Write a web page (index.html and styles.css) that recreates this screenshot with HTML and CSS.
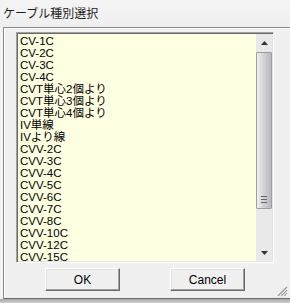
FILE: index.html
```html
<!DOCTYPE html>
<html>
<head>
<meta charset="utf-8">
<link rel="stylesheet" href="styles.css">
</head>
<body>
<div class="title">ケーブル種別選択</div>
<div class="dialog">
  <div class="listbox">
    <ul class="items">
      <li>CV-1C</li>
      <li>CV-2C</li>
      <li>CV-3C</li>
      <li>CV-4C</li>
      <li>CVT単心2個より</li>
      <li>CVT単心3個より</li>
      <li>CVT単心4個より</li>
      <li>IV単線</li>
      <li>IVより線</li>
      <li>CVV-2C</li>
      <li>CVV-3C</li>
      <li>CVV-4C</li>
      <li>CVV-5C</li>
      <li>CVV-6C</li>
      <li>CVV-7C</li>
      <li>CVV-8C</li>
      <li>CVV-10C</li>
      <li>CVV-12C</li>
      <li>CVV-15C</li>
    </ul>
    <div class="scrollbar">
      <div class="arrow up"><svg width="7" height="4" viewBox="0 0 7 4"><path d="M3.5 0 L7 4 L0 4 Z" fill="#333"/></svg></div>
      <div class="track">
        <div class="thumb">
          <svg class="grip" width="6" height="7" viewBox="0 0 6 7"><path d="M0 0.5H6M0 3.5H6M0 6.5H6" stroke="#666" stroke-width="1"/></svg>
        </div>
      </div>
      <div class="arrow down"><svg width="7" height="4" viewBox="0 0 7 4"><path d="M0 0 L7 0 L3.5 4 Z" fill="#333"/></svg></div>
    </div>
  </div>
  <div class="buttons">
    <button class="btn ok">OK</button>
    <button class="btn cancel">Cancel</button>
  </div>
  <svg class="resize-grip" width="12" height="12" viewBox="0 0 12 12">
    <path d="M11 2 L2 11 M11 5 L5 11 M11 8 L8 11" stroke="#9a9a9a" stroke-width="1.4"/>
    <path d="M12 3 L3 12 M12 6 L6 12 M12 9 L9 12" stroke="#fff" stroke-width="0.8"/>
  </svg>
</div>
<div class="bottom-band"></div>
</body>
</html>
```

FILE: styles.css
```css
html, body {
  margin: 0;
  padding: 0;
}
body {
  width: 290px;
  height: 303px;
  overflow: hidden;
  background: linear-gradient(to right, #f2f2f2 0%, #f7f7f7 40%, #ececec 60%, #e9eeee 85%, #eeeeee 100%);
  font-family: "Liberation Sans", "Noto Sans CJK JP", sans-serif;
}
.title {
  height: 27px;
  box-sizing: border-box;
  padding: 5px 0 0 3px;
  font-family: "Noto Sans CJK JP", sans-serif;
  font-size: 12px;
  line-height: 16px;
  color: #1e1e1e;
  background: linear-gradient(to bottom, #f4f4f4 0%, #efefef 100%);
}
.dialog {
  position: relative;
  margin-left: 3px;
  height: 272px;
  box-sizing: border-box;
  background: #f0f0f0;
  border-top: 1px solid #8c8c8c;
  border-left: 1px solid #8c8c8c;
  border-bottom: 1px solid #6a6a6a;
  box-shadow: inset 1px 1px 0 #ffffff;
  padding: 4px 0 0 12px;
}
.listbox {
  display: flex;
  width: 258px;
  height: 231px;
  box-sizing: border-box;
  border-top: 1px solid #a0a0a0;
  border-left: 1px solid #a0a0a0;
  border-right: 1px solid #ffffff;
  border-bottom: 1px solid #ffffff;
  box-shadow: inset 1px 1px 0 #696969, inset -1px -1px 0 #e3e3e3;
  background: #ffffe1;
  padding: 2px 1px 1px 2px;
}
.items {
  list-style: none;
  margin: 0;
  padding: 0 0 0 1px;
  flex: 1;
  overflow: hidden;
  font-size: 11.5px;
  line-height: 12px;
  color: #000;
}
.items li {
  height: 12px;
  white-space: nowrap;
}
.scrollbar {
  width: 16px;
  display: flex;
  flex-direction: column;
  background: #e9e9ea;
  margin-top: -1px;
}
.arrow {
  height: 17px;
  display: flex;
  align-items: center;
  justify-content: center;
  flex: none;
}
.track {
  flex: 1;
  display: flex;
  flex-direction: column;
}
.thumb {
  margin-top: 1px;
  height: 157px;
  box-sizing: border-box;
  border: 1px solid #9d9da2;
  border-radius: 1px;
  background: linear-gradient(to right, #f0f0f2 0%, #dcdce0 30%, #c6c6cc 70%, #b9b9c0 100%);
  display: flex;
  justify-content: center;
  align-items: flex-end;
  padding-bottom: 5px;
}
.grip {
  display: block;
}
.buttons {
  display: flex;
  gap: 50px;
  padding: 5px 0 0 29px;
}
.btn {
  width: 75px;
  height: 23px;
  box-sizing: border-box;
  margin: 0;
  padding: 0;
  background: #f0f0f0;
  border-top: 1px solid #ffffff;
  border-left: 1px solid #ffffff;
  border-right: 1px solid #696969;
  border-bottom: 1px solid #696969;
  box-shadow: inset -1px -1px 0 #a0a0a0, inset 1px 1px 0 #e3e3e3;
  font-family: "Liberation Sans", sans-serif;
  font-size: 12px;
  color: #000;
}
.resize-grip {
  position: absolute;
  right: 2px;
  bottom: 1px;
}
.bottom-band {
  height: 4px;
  background: linear-gradient(to bottom, #a8a8a8, #cfcfcf);
}
```
